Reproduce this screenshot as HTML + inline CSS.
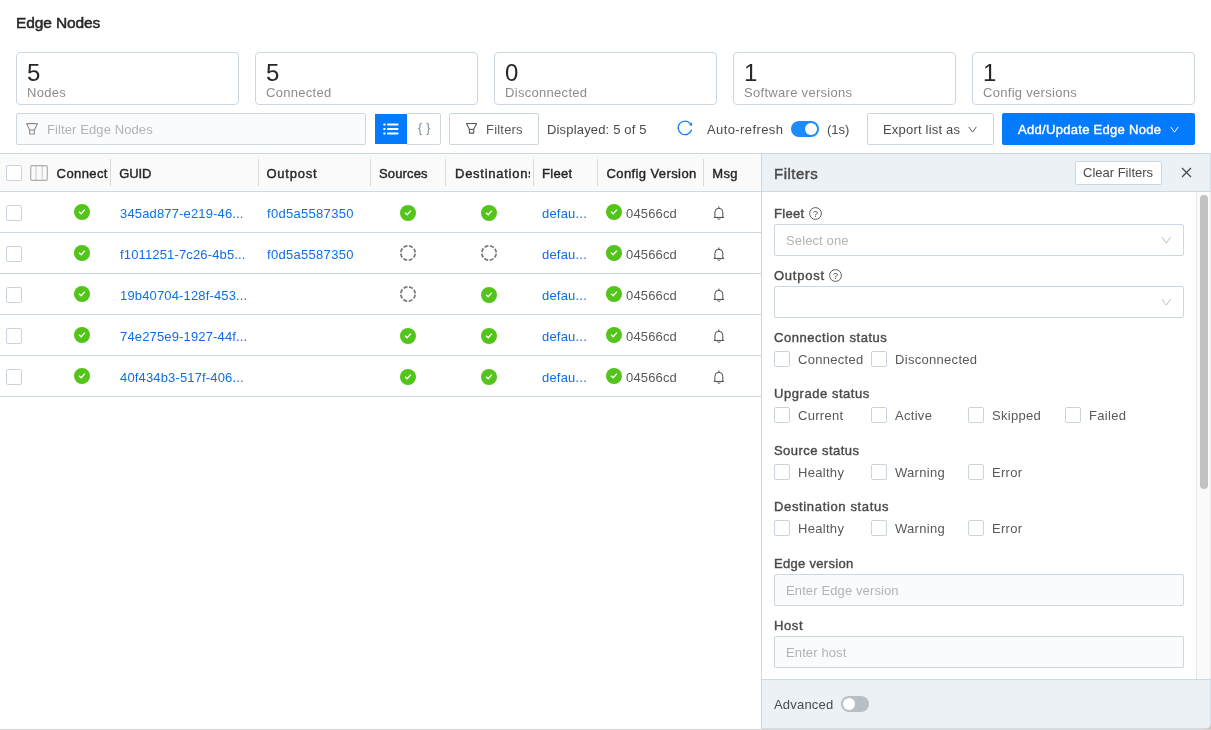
<!DOCTYPE html>
<html lang="en">
<head>
<meta charset="utf-8">
<title>Edge Nodes</title>
<style>
*{box-sizing:border-box;margin:0;padding:0}
html,body{width:1211px;height:730px;overflow:hidden;background:#fff}
body{font-family:"Liberation Sans",sans-serif;font-size:13px;color:#4a4a4a;position:relative}
#app{position:absolute;left:0;top:0;width:1211px;height:730px;will-change:transform}
.abs{position:absolute}
.t{position:absolute;white-space:nowrap;line-height:16px;font-size:13px}
.sb{-webkit-text-stroke:0.4px currentColor;letter-spacing:0.3px}
h1{position:absolute;left:16px;top:14px;font-size:15.5px;font-weight:400;color:#262626;line-height:18px;letter-spacing:-0.12px;-webkit-text-stroke:0.5px #262626;white-space:nowrap}
.card{position:absolute;top:52px;width:223px;height:53px;border:1px solid #ccd7e0;border-radius:4px;background:#fff}
.card .n{position:absolute;left:10px;top:6px;font-size:24px;line-height:28px;color:#262626}
.card .l{position:absolute;left:10px;top:32px;font-size:13px;line-height:16px;color:#8c8c8c;letter-spacing:0.3px;white-space:nowrap}
.inp{position:absolute;border:1px solid #ccd7e0;border-radius:2px;background:#f9fbfd}
.btn{position:absolute;border:1px solid #ccd7e0;border-radius:2px;background:#fff;top:113px;height:32px}
.ph{color:#b3b3b3}
.hdr{position:absolute;left:0;top:153px;width:761px;height:39px;background:#fafafa;border-top:1px solid #ccd7e0;border-bottom:1px solid #ccd7e0}
.hdr .h{position:absolute;top:12px;font-size:13px;line-height:16px;color:#262626;white-space:nowrap;overflow:hidden;-webkit-text-stroke:0.4px #262626;letter-spacing:0.3px}
.hdr .sep{position:absolute;top:5px;width:1px;height:27px;background:#d9d9d9}
.row{position:absolute;left:0;width:761px;height:41px;border-bottom:1px solid #ccd7e0}
.cb{position:absolute;width:16px;height:16px;border:1px solid #c9d4de;border-radius:2px;background:#fff}
.lnk{position:absolute;top:14px;font-size:13px;line-height:16px;color:#0f6fe6;white-space:nowrap}
.panel{position:absolute;left:761px;top:153px;width:450px;height:577px;border-left:1px solid #ccd7e0}
.phead{position:absolute;left:0;top:0;width:449px;height:39px;background:#ecf1f5;border-top:1px solid #ccd7e0;border-bottom:1px solid #ccd7e0}
.pfoot{position:absolute;left:0;top:526px;width:449px;height:50px;background:#ecf1f5;border-top:1px solid #ccd7e0;border-bottom:1px solid #d3dde6}
.lab{position:absolute;left:12px;font-size:13px;line-height:16px;color:#4a4a4a;white-space:nowrap;-webkit-text-stroke:0.4px #4a4a4a;letter-spacing:0.3px}
.opt{position:absolute;font-size:13px;line-height:16px;color:#595959;white-space:nowrap;letter-spacing:0.3px}
</style>
</head>
<body>
<div id="app">
<h1>Edge Nodes</h1>
<div class="card" style="left:16px"><div class="n">5</div><div class="l">Nodes</div></div>
<div class="card" style="left:255px"><div class="n">5</div><div class="l">Connected</div></div>
<div class="card" style="left:494px"><div class="n">0</div><div class="l">Disconnected</div></div>
<div class="card" style="left:733px"><div class="n">1</div><div class="l">Software versions</div></div>
<div class="card" style="left:972px"><div class="n">1</div><div class="l">Config versions</div></div>
<div class="inp" style="left:16px;top:113px;width:350px;height:32px"><svg class="abs" style="left:9px;top:9.1px" width="12.2" height="11.7" viewBox="0 0 12.2 11.7" fill="none" stroke="#8f8f8f" stroke-width="1.1"><path d="M0.6 0.6H11.5L8.4 6.9V11H3.7V6.9z" stroke-linejoin="round"/><path d="M3.7 7H8.4"/></svg><span class="t ph" style="left:30px;top:8px;letter-spacing:0.1px">Filter Edge Nodes</span></div>
<div class="abs" style="left:375px;top:114px;width:32px;height:30px;background:#047bff"><svg class="abs" style="left:8px;top:8px" width="16" height="14" viewBox="0 0 16 14" fill="#fff"><rect x="0.3" y="1.4" width="2.2" height="2.2" rx="0.7"/><rect x="4" y="1.4" width="11.5" height="2.2" rx="0.8"/><rect x="0.3" y="5.9" width="2.2" height="2.2" rx="0.7"/><rect x="4" y="5.9" width="11.5" height="2.2" rx="0.8"/><rect x="0.3" y="10.4" width="2.2" height="2.2" rx="0.7"/><rect x="4" y="10.4" width="11.5" height="2.2" rx="0.8"/></svg></div>
<div class="abs" style="left:407px;top:113px;width:34px;height:32px;border:1px solid #ccd7e0;border-left:0;border-radius:0 2px 2px 0;background:#fff"><span class="t" style="left:11px;top:6px;font-size:12px;color:#73889b;letter-spacing:4.2px">{}</span></div>
<div class="btn" style="left:449px;width:90px"><svg class="abs" style="left:16px;top:9px" width="11.22" height="10.76" viewBox="0 0 12.2 11.7" fill="none" stroke="#595959" stroke-width="1.2"><path d="M0.6 0.6H11.5L8.4 6.9V11H3.7V6.9z" stroke-linejoin="round"/><path d="M3.7 7H8.4"/></svg><span class="t" style="left:36px;top:8px;color:#595959;letter-spacing:0.2px">Filters</span></div>
<span class="t" style="left:547px;top:122px;letter-spacing:0.17px">Displayed: 5 of 5</span>
<svg class="abs" style="left:677px;top:120px" width="16" height="16" viewBox="0 0 16 16" fill="none" stroke="#0b7af5" stroke-width="1.3"><path d="M14.4 10.2A6.8 6.8 0 1 1 13.3 3.6" stroke-linecap="round"/><path d="M15.1 2.3V5.8L12.1 5.3z" fill="#0b7af5" stroke="none"/></svg>
<span class="t" style="left:707px;top:122px;letter-spacing:0.4px">Auto-refresh</span>
<div class="abs" style="left:791px;top:121px;width:28px;height:16px;border-radius:8px;background:#1a8cff"><div class="abs" style="right:2px;top:2px;width:12px;height:12px;border-radius:6px;background:#fff"></div></div>
<span class="t" style="left:827px;top:122px">(1s)</span>
<div class="btn" style="left:867px;width:127px"><span class="t" style="left:15px;top:8px;letter-spacing:0.2px">Export list as</span><svg class="abs" style="left:100.3px;top:11.5px" width="9" height="7.2" viewBox="0 0 10 8" fill="none" stroke="#595959" stroke-width="1.11"><path d="M0.8 1l4.2 5.8 4.2-5.8"/></svg></div>
<div class="abs" style="left:1002px;top:113px;width:193px;height:32px;background:#047bff;border-radius:2px;box-shadow:0 2px 0 rgba(0,0,0,0.03)"><span class="t" style="left:16px;top:9px;color:#fff;-webkit-text-stroke:0.4px #fff;letter-spacing:0.3px">Add/Update Edge Node</span><svg class="abs" style="left:167.8px;top:12.5px" width="9" height="7.2" viewBox="0 0 10 8" fill="none" stroke="#fff" stroke-width="1.11"><path d="M0.8 1l4.2 5.8 4.2-5.8"/></svg></div>
<div class="hdr"><div class="cb" style="left:6px;top:11px"></div><svg class="abs" style="left:30px;top:11px" width="18" height="16" viewBox="0 0 18 16" fill="none" stroke="#a6a6a6" stroke-width="1"><path d="M6 0.5v15M12.2 0.5v15" stroke="#cfcfcf" stroke-width="1.2"/><rect x="0.7" y="0.6" width="16.6" height="14.8" rx="1.5" stroke="#adadad" stroke-width="1.2"/></svg>
<div class="h" style="left:56.6px;letter-spacing:0.4px;width:51.4px">Connect</div>
<div class="h" style="left:119.3px;letter-spacing:-0.1px">GUID</div>
<div class="h" style="left:266.5px;letter-spacing:0.75px">Outpost</div>
<div class="h" style="left:379px;letter-spacing:0.15px">Sources</div>
<div class="h" style="left:455px;letter-spacing:0.74px;width:75px">Destinations</div>
<div class="h" style="left:542px;letter-spacing:0.3px">Fleet</div>
<div class="h" style="left:606.5px;letter-spacing:0.4px">Config Version</div>
<div class="h" style="left:712.3px;letter-spacing:0.3px">Msg</div>
<div class="sep" style="left:110px"></div>
<div class="sep" style="left:258px"></div>
<div class="sep" style="left:370px"></div>
<div class="sep" style="left:445px"></div>
<div class="sep" style="left:533px"></div>
<div class="sep" style="left:597px"></div>
<div class="sep" style="left:703px"></div>
</div>
<div class="row" style="top:192px"><div class="cb" style="left:6px;top:13px"></div><svg class="abs" style="left:74px;top:12px" width="16" height="16" viewBox="0 0 16 16"><circle cx="8" cy="8" r="8" fill="#52c41a"/><path d="M5 7.7l2.2 2.1 3.7-4.2" fill="none" stroke="#fff" stroke-width="1.3"/></svg><span class="lnk" style="left:120px;letter-spacing:0.15px">345ad877-e219-46...</span><span class="lnk" style="left:267px;letter-spacing:0.3px">f0d5a5587350</span><svg class="abs" style="left:400px;top:13px" width="16" height="16" viewBox="0 0 16 16"><circle cx="8" cy="8" r="8" fill="#52c41a"/><path d="M5 7.7l2.2 2.1 3.7-4.2" fill="none" stroke="#fff" stroke-width="1.3"/></svg><svg class="abs" style="left:481px;top:13px" width="16" height="16" viewBox="0 0 16 16"><circle cx="8" cy="8" r="8" fill="#52c41a"/><path d="M5 7.7l2.2 2.1 3.7-4.2" fill="none" stroke="#fff" stroke-width="1.3"/></svg><span class="lnk" style="left:542px;letter-spacing:0.2px">defau...</span><svg class="abs" style="left:606px;top:12px" width="16" height="16" viewBox="0 0 16 16"><circle cx="8" cy="8" r="8" fill="#52c41a"/><path d="M5 7.7l2.2 2.1 3.7-4.2" fill="none" stroke="#fff" stroke-width="1.3"/></svg><span class="lnk" style="left:626px;color:#595959;letter-spacing:0.15px">04566cd</span><svg class="abs" style="left:713px;top:14px" width="12" height="15" viewBox="0 0 12 15" fill="none" stroke="#4a4a4a" stroke-width="1"><path d="M1.9 11.4V6.2a3.95 3.95 0 0 1 7.9 0v5.2"/><path d="M0.8 11.4h10.3"/><path d="M4.5 12.3a1.45 1.45 0 0 0 2.8 0" stroke-width="0.9"/><path d="M5.85 0.5v1.7"/></svg></div>
<div class="row" style="top:233px"><div class="cb" style="left:6px;top:13px"></div><svg class="abs" style="left:74px;top:12px" width="16" height="16" viewBox="0 0 16 16"><circle cx="8" cy="8" r="8" fill="#52c41a"/><path d="M5 7.7l2.2 2.1 3.7-4.2" fill="none" stroke="#fff" stroke-width="1.3"/></svg><span class="lnk" style="left:120px;letter-spacing:0.15px">f1011251-7c26-4b5...</span><span class="lnk" style="left:267px;letter-spacing:0.3px">f0d5a5587350</span><svg class="abs" style="left:400px;top:12px" width="16" height="16" viewBox="0 0 16 16"><circle cx="8" cy="8" r="7.2" fill="none" stroke="#7d7d7d" stroke-width="1.8" stroke-dasharray="4.05 1.605" stroke-dashoffset="-0.8"/></svg><svg class="abs" style="left:481px;top:12px" width="16" height="16" viewBox="0 0 16 16"><circle cx="8" cy="8" r="7.2" fill="none" stroke="#7d7d7d" stroke-width="1.8" stroke-dasharray="4.05 1.605" stroke-dashoffset="-0.8"/></svg><span class="lnk" style="left:542px;letter-spacing:0.2px">defau...</span><svg class="abs" style="left:606px;top:12px" width="16" height="16" viewBox="0 0 16 16"><circle cx="8" cy="8" r="8" fill="#52c41a"/><path d="M5 7.7l2.2 2.1 3.7-4.2" fill="none" stroke="#fff" stroke-width="1.3"/></svg><span class="lnk" style="left:626px;color:#595959;letter-spacing:0.15px">04566cd</span><svg class="abs" style="left:713px;top:14px" width="12" height="15" viewBox="0 0 12 15" fill="none" stroke="#4a4a4a" stroke-width="1"><path d="M1.9 11.4V6.2a3.95 3.95 0 0 1 7.9 0v5.2"/><path d="M0.8 11.4h10.3"/><path d="M4.5 12.3a1.45 1.45 0 0 0 2.8 0" stroke-width="0.9"/><path d="M5.85 0.5v1.7"/></svg></div>
<div class="row" style="top:274px"><div class="cb" style="left:6px;top:13px"></div><svg class="abs" style="left:74px;top:12px" width="16" height="16" viewBox="0 0 16 16"><circle cx="8" cy="8" r="8" fill="#52c41a"/><path d="M5 7.7l2.2 2.1 3.7-4.2" fill="none" stroke="#fff" stroke-width="1.3"/></svg><span class="lnk" style="left:120px;letter-spacing:0.15px">19b40704-128f-453...</span><svg class="abs" style="left:400px;top:12px" width="16" height="16" viewBox="0 0 16 16"><circle cx="8" cy="8" r="7.2" fill="none" stroke="#7d7d7d" stroke-width="1.8" stroke-dasharray="4.05 1.605" stroke-dashoffset="-0.8"/></svg><svg class="abs" style="left:481px;top:13px" width="16" height="16" viewBox="0 0 16 16"><circle cx="8" cy="8" r="8" fill="#52c41a"/><path d="M5 7.7l2.2 2.1 3.7-4.2" fill="none" stroke="#fff" stroke-width="1.3"/></svg><span class="lnk" style="left:542px;letter-spacing:0.2px">defau...</span><svg class="abs" style="left:606px;top:12px" width="16" height="16" viewBox="0 0 16 16"><circle cx="8" cy="8" r="8" fill="#52c41a"/><path d="M5 7.7l2.2 2.1 3.7-4.2" fill="none" stroke="#fff" stroke-width="1.3"/></svg><span class="lnk" style="left:626px;color:#595959;letter-spacing:0.15px">04566cd</span><svg class="abs" style="left:713px;top:14px" width="12" height="15" viewBox="0 0 12 15" fill="none" stroke="#4a4a4a" stroke-width="1"><path d="M1.9 11.4V6.2a3.95 3.95 0 0 1 7.9 0v5.2"/><path d="M0.8 11.4h10.3"/><path d="M4.5 12.3a1.45 1.45 0 0 0 2.8 0" stroke-width="0.9"/><path d="M5.85 0.5v1.7"/></svg></div>
<div class="row" style="top:315px"><div class="cb" style="left:6px;top:13px"></div><svg class="abs" style="left:74px;top:12px" width="16" height="16" viewBox="0 0 16 16"><circle cx="8" cy="8" r="8" fill="#52c41a"/><path d="M5 7.7l2.2 2.1 3.7-4.2" fill="none" stroke="#fff" stroke-width="1.3"/></svg><span class="lnk" style="left:120px;letter-spacing:0.15px">74e275e9-1927-44f...</span><svg class="abs" style="left:400px;top:13px" width="16" height="16" viewBox="0 0 16 16"><circle cx="8" cy="8" r="8" fill="#52c41a"/><path d="M5 7.7l2.2 2.1 3.7-4.2" fill="none" stroke="#fff" stroke-width="1.3"/></svg><svg class="abs" style="left:481px;top:13px" width="16" height="16" viewBox="0 0 16 16"><circle cx="8" cy="8" r="8" fill="#52c41a"/><path d="M5 7.7l2.2 2.1 3.7-4.2" fill="none" stroke="#fff" stroke-width="1.3"/></svg><span class="lnk" style="left:542px;letter-spacing:0.2px">defau...</span><svg class="abs" style="left:606px;top:12px" width="16" height="16" viewBox="0 0 16 16"><circle cx="8" cy="8" r="8" fill="#52c41a"/><path d="M5 7.7l2.2 2.1 3.7-4.2" fill="none" stroke="#fff" stroke-width="1.3"/></svg><span class="lnk" style="left:626px;color:#595959;letter-spacing:0.15px">04566cd</span><svg class="abs" style="left:713px;top:14px" width="12" height="15" viewBox="0 0 12 15" fill="none" stroke="#4a4a4a" stroke-width="1"><path d="M1.9 11.4V6.2a3.95 3.95 0 0 1 7.9 0v5.2"/><path d="M0.8 11.4h10.3"/><path d="M4.5 12.3a1.45 1.45 0 0 0 2.8 0" stroke-width="0.9"/><path d="M5.85 0.5v1.7"/></svg></div>
<div class="row" style="top:356px"><div class="cb" style="left:6px;top:13px"></div><svg class="abs" style="left:74px;top:12px" width="16" height="16" viewBox="0 0 16 16"><circle cx="8" cy="8" r="8" fill="#52c41a"/><path d="M5 7.7l2.2 2.1 3.7-4.2" fill="none" stroke="#fff" stroke-width="1.3"/></svg><span class="lnk" style="left:120px;letter-spacing:0.15px">40f434b3-517f-406...</span><svg class="abs" style="left:400px;top:13px" width="16" height="16" viewBox="0 0 16 16"><circle cx="8" cy="8" r="8" fill="#52c41a"/><path d="M5 7.7l2.2 2.1 3.7-4.2" fill="none" stroke="#fff" stroke-width="1.3"/></svg><svg class="abs" style="left:481px;top:13px" width="16" height="16" viewBox="0 0 16 16"><circle cx="8" cy="8" r="8" fill="#52c41a"/><path d="M5 7.7l2.2 2.1 3.7-4.2" fill="none" stroke="#fff" stroke-width="1.3"/></svg><span class="lnk" style="left:542px;letter-spacing:0.2px">defau...</span><svg class="abs" style="left:606px;top:12px" width="16" height="16" viewBox="0 0 16 16"><circle cx="8" cy="8" r="8" fill="#52c41a"/><path d="M5 7.7l2.2 2.1 3.7-4.2" fill="none" stroke="#fff" stroke-width="1.3"/></svg><span class="lnk" style="left:626px;color:#595959;letter-spacing:0.15px">04566cd</span><svg class="abs" style="left:713px;top:14px" width="12" height="15" viewBox="0 0 12 15" fill="none" stroke="#4a4a4a" stroke-width="1"><path d="M1.9 11.4V6.2a3.95 3.95 0 0 1 7.9 0v5.2"/><path d="M0.8 11.4h10.3"/><path d="M4.5 12.3a1.45 1.45 0 0 0 2.8 0" stroke-width="0.9"/><path d="M5.85 0.5v1.7"/></svg></div>
<div class="panel"><div class="phead"><span class="t" style="left:12px;top:11px;font-size:15px;line-height:18px;-webkit-text-stroke:0.45px #4a4a4a;letter-spacing:0.5px">Filters</span><div class="abs" style="left:313px;top:7px;width:87px;height:24px;border:1px solid #ccd7e0;border-radius:2px;background:#fff"><span class="t" style="left:7px;top:3px">Clear Filters</span></div><svg class="abs" style="left:419px;top:13px" width="11" height="11" viewBox="0 0 11 11" stroke="#4a4a4a" stroke-width="1.3" fill="none"><path d="M1 1l9 9M10 1l-9 9"/></svg></div>
<div class="abs" style="left:434px;top:39px;width:15px;height:487px;background:#fafafa;border-left:1px solid #e8e8e8"></div>
<div class="abs" style="left:438px;top:42px;width:8px;height:294px;border-radius:4px;background:#c2c2c2"></div>
<div class="lab" style="top:53px">Fleet</div><svg class="abs" style="left:47px;top:54px" width="13" height="13" viewBox="0 0 13 13"><circle cx="6.5" cy="6.5" r="5.9" fill="none" stroke="#4a4a4a" stroke-width="0.9"/><text x="6.5" y="9.6" text-anchor="middle" font-family="Liberation Sans, sans-serif" font-size="9" fill="#4a4a4a">?</text></svg>
<div class="inp" style="left:12px;top:71px;width:410px;height:32px;background:#fff"><span class="t ph" style="left:11px;top:8px;letter-spacing:0.12px">Select one</span><svg class="abs" style="left:385.5px;top:11px" width="10.5" height="8.4" viewBox="0 0 10 8" fill="none" stroke="#bfbfbf" stroke-width="0.95"><path d="M0.8 1l4.2 5.8 4.2-5.8"/></svg></div>
<div class="lab" style="top:115px;letter-spacing:0.75px">Outpost</div><svg class="abs" style="left:67px;top:116px" width="13" height="13" viewBox="0 0 13 13"><circle cx="6.5" cy="6.5" r="5.9" fill="none" stroke="#4a4a4a" stroke-width="0.9"/><text x="6.5" y="9.6" text-anchor="middle" font-family="Liberation Sans, sans-serif" font-size="9" fill="#4a4a4a">?</text></svg>
<div class="inp" style="left:12px;top:133px;width:410px;height:32px;background:#fff"><svg class="abs" style="left:385.5px;top:11px" width="10.5" height="8.4" viewBox="0 0 10 8" fill="none" stroke="#bfbfbf" stroke-width="0.95"><path d="M0.8 1l4.2 5.8 4.2-5.8"/></svg></div>
<div class="lab" style="top:177px;letter-spacing:0.55px">Connection status</div>
<div class="cb" style="left:12px;top:198px"></div><div class="opt" style="left:36px;top:199px">Connected</div>
<div class="cb" style="left:109px;top:198px"></div><div class="opt" style="left:133px;top:199px">Disconnected</div>
<div class="lab" style="top:233px;letter-spacing:0.55px">Upgrade status</div>
<div class="cb" style="left:12px;top:254px"></div><div class="opt" style="left:36px;top:255px">Current</div>
<div class="cb" style="left:109px;top:254px"></div><div class="opt" style="left:133px;top:255px">Active</div>
<div class="cb" style="left:206px;top:254px"></div><div class="opt" style="left:230px;top:255px">Skipped</div>
<div class="cb" style="left:303px;top:254px"></div><div class="opt" style="left:327px;top:255px">Failed</div>
<div class="lab" style="top:290px;letter-spacing:0.45px">Source status</div>
<div class="cb" style="left:12px;top:311px"></div><div class="opt" style="left:36px;top:312px">Healthy</div>
<div class="cb" style="left:109px;top:311px"></div><div class="opt" style="left:133px;top:312px">Warning</div>
<div class="cb" style="left:206px;top:311px"></div><div class="opt" style="left:230px;top:312px">Error</div>
<div class="lab" style="top:346px;letter-spacing:0.65px">Destination status</div>
<div class="cb" style="left:12px;top:367px"></div><div class="opt" style="left:36px;top:368px">Healthy</div>
<div class="cb" style="left:109px;top:367px"></div><div class="opt" style="left:133px;top:368px">Warning</div>
<div class="cb" style="left:206px;top:367px"></div><div class="opt" style="left:230px;top:368px">Error</div>
<div class="lab" style="top:403px">Edge version</div>
<div class="inp" style="left:12px;top:421px;width:410px;height:32px;background:#f9fbfd"><span class="t ph" style="left:11px;top:8px;letter-spacing:0.12px">Enter Edge version</span></div>
<div class="lab" style="top:465px;letter-spacing:0.6px">Host</div>
<div class="inp" style="left:12px;top:483px;width:410px;height:32px;background:#f9fbfd"><span class="t ph" style="left:11px;top:8px;letter-spacing:0.12px">Enter host</span></div>
<div class="pfoot"><span class="t" style="left:12px;top:17px;letter-spacing:0.2px">Advanced</span><div class="abs" style="left:79px;top:16px;width:28px;height:16px;border-radius:8px;background:#b9bfc4"><div class="abs" style="left:2px;top:2px;width:12px;height:12px;border-radius:6px;background:#fff"></div></div></div>
</div>
<div class="abs" style="left:1210px;top:153px;width:1px;height:576px;background:#d5dee6"></div>
<div class="abs" style="left:1210px;top:192px;width:1px;height:487px;background:#ececec"></div>
<div class="abs" style="left:0;top:729px;width:1211px;height:1px;background:#d6d6d6"></div>
<svg class="abs" style="left:1205px;top:723px" width="6" height="6" viewBox="0 0 6 6"><path d="M6 0V6H0A6 6 0 0 0 6 0z" fill="#c6c6c6"/></svg>
</div>
</body>
</html>
